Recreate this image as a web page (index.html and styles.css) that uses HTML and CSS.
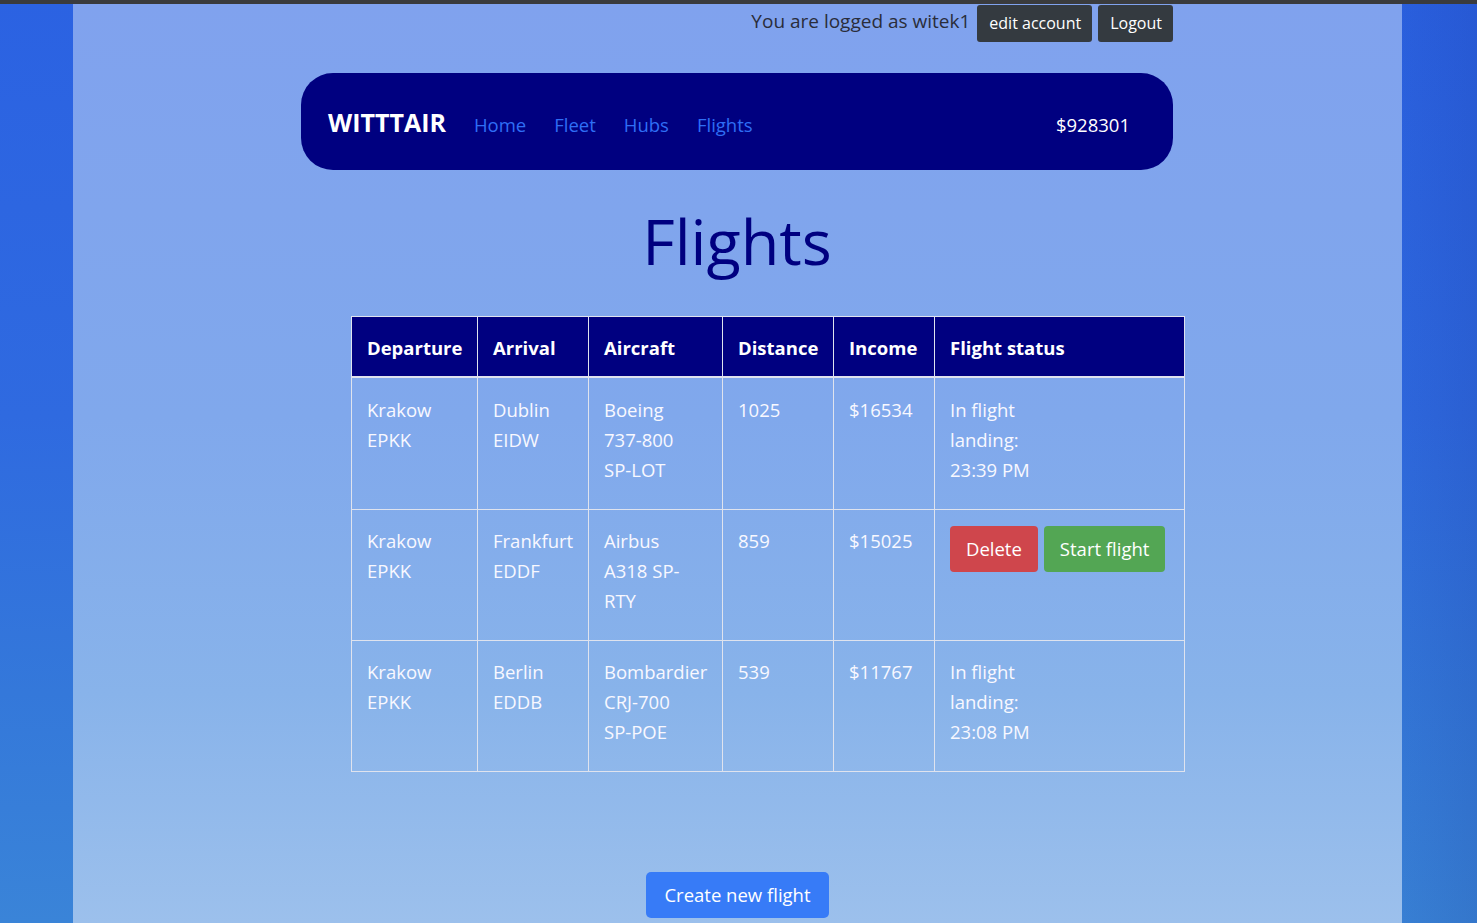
FILE: index.html
```html
<!DOCTYPE html>
<html lang="en">
<head>
<meta charset="utf-8">
<title>WITTTAIR - Flights</title>
<link rel="stylesheet" href="styles.css">
</head>
<body>
<div class="topline"></div>
<div class="page">
  <div class="panel">
    <div class="inner">
      <div class="account">
        <span class="logged">You are logged as witek1</span>
        <button class="btn-dark">edit account</button>
        <button class="btn-dark">Logout</button>
      </div>
      <nav class="navbar">
        <span class="brand">WITTTAIR</span>
        <a class="nav-link" href="#">Home</a>
        <a class="nav-link" href="#">Fleet</a>
        <a class="nav-link" href="#">Hubs</a>
        <a class="nav-link" href="#">Flights</a>
        <span class="money">$928301</span>
      </nav>
      <h1 class="title">Flights</h1>
    </div>
    <div class="table-wrap">
      <table class="flights">
        <colgroup>
          <col class="c1"><col class="c2"><col class="c3"><col class="c4"><col class="c5"><col class="c6">
        </colgroup>
        <thead>
          <tr><th>Departure</th><th>Arrival</th><th>Aircraft</th><th>Distance</th><th>Income</th><th>Flight status</th></tr>
        </thead>
        <tbody>
          <tr class="first">
            <td>Krakow<br>EPKK</td><td>Dublin<br>EIDW</td><td>Boeing<br>737-800<br>SP-LOT</td><td>1025</td><td>$16534</td><td>In flight<br>landing:<br>23:39 PM</td>
          </tr>
          <tr>
            <td>Krakow<br>EPKK</td><td>Frankfurt<br>EDDF</td><td>Airbus<br>A318 SP-<br>RTY</td><td>859</td><td>$15025</td>
            <td><div class="actions"><button class="btn btn-danger">Delete</button><button class="btn btn-success">Start flight</button></div></td>
          </tr>
          <tr>
            <td>Krakow<br>EPKK</td><td>Berlin<br>EDDB</td><td>Bombardier<br>CRJ-700<br>SP-POE</td><td>539</td><td>$11767</td><td>In flight<br>landing:<br>23:08 PM</td>
          </tr>
        </tbody>
      </table>
    </div>
    <div class="create-row">
      <button class="btn btn-primary">Create new flight</button>
    </div>
  </div>
</div>
</body>
</html>
```
FILE: styles.css
```css
html, body {
  margin: 0;
  padding: 0;
}
body {
  font-family: "Open Sans", "Noto Sans", "Liberation Sans", sans-serif;
  font-size: 18.5px;
  line-height: 30px;
  background:
    linear-gradient(to right, rgba(0, 0, 0, 0) 92%, rgba(10, 20, 110, 0.12) 100%),
    linear-gradient(to bottom, #2b62e2 0%, #2f6ae0 45%, #3478da 75%, #3a84d8 100%);
  min-height: 100vh;
  overflow: hidden;
}
.topline {
  height: 4px;
  background: #3a3b3d;
}
.page {
  display: flex;
  padding-left: 73px;
}
.panel {
  width: 1329px;
  height: 919px;
  background: linear-gradient(to bottom, #80a2ee 0%, #80a8ec 45%, #88b3ea 75%, #9cc0ec 100%);
}
.inner {
  width: 872px;
  margin-left: 228px;
}
.account {
  display: flex;
  justify-content: flex-end;
  align-items: flex-start;
  gap: 6px;
  padding-top: 1px;
}
.logged {
  color: #2a2d3a;
  font-size: 19px;
  line-height: 33px;
  margin-right: 1px;
}
.btn-dark {
  font-family: inherit;
  font-size: 16px;
  line-height: 29px;
  padding: 4px 11px 4px 12px;
  border: 0;
  border-radius: 3px;
  background: #343a40;
  color: #fff;
}
.navbar {
  margin-top: 31px;
  height: 97px;
  box-sizing: border-box;
  background: #000080;
  border-radius: 32px;
  display: flex;
  align-items: center;
  gap: 28px;
  padding: 0 43px 0 27px;
}
.brand {
  color: #fff;
  font-weight: 700;
  font-size: 25px;
}
.nav-link {
  color: #2f6ef5;
  text-decoration: none;
  font-size: 18.5px;
  margin-top: 6px;
}
.money {
  margin-left: auto;
  color: #fff;
  font-size: 18.5px;
  margin-top: 7px;
}
.title {
  margin: 29px 0 0;
  text-align: center;
  color: #000080;
  font-size: 63px;
  font-weight: 500;
  line-height: 84px;
}
.table-wrap {
  display: flex;
  padding-left: 278px;
  margin-top: 33px;
}
.flights {
  border-collapse: collapse;
  table-layout: fixed;
  width: 833px;
  color: #fff;
}
.c1 { width: 126px; }
.c2 { width: 111px; }
.c3 { width: 134px; }
.c4 { width: 111px; }
.c5 { width: 101px; }
.c6 { width: 250px; }
.flights th, .flights td {
  border: 1px solid #dfe3ee;
  text-align: left;
  vertical-align: top;
  padding: 16px 15px 24px 15px;
}
.flights th {
  background: #000080;
  font-weight: 700;
  padding: 16px 15px 13px 15px;
  border-bottom-width: 2px;
}
.flights .first td {
  padding-top: 17px;
}
.flights td {
  color: #f8f8ff;
}
.actions {
  display: flex;
  gap: 6px;
}
.btn {
  font-family: inherit;
  font-size: 18.5px;
  line-height: 30px;
  padding: 8px 16px;
  border: 0;
  border-radius: 4px;
  color: #fff;
}
.btn-danger {
  background: #cf464c;
}
.btn-success {
  background: #53a654;
}
.btn-primary {
  background: #377bf7;
  border-radius: 5px;
  padding: 8px 18px;
}
.create-row {
  display: flex;
  justify-content: center;
  margin-top: 100px;
}
```
